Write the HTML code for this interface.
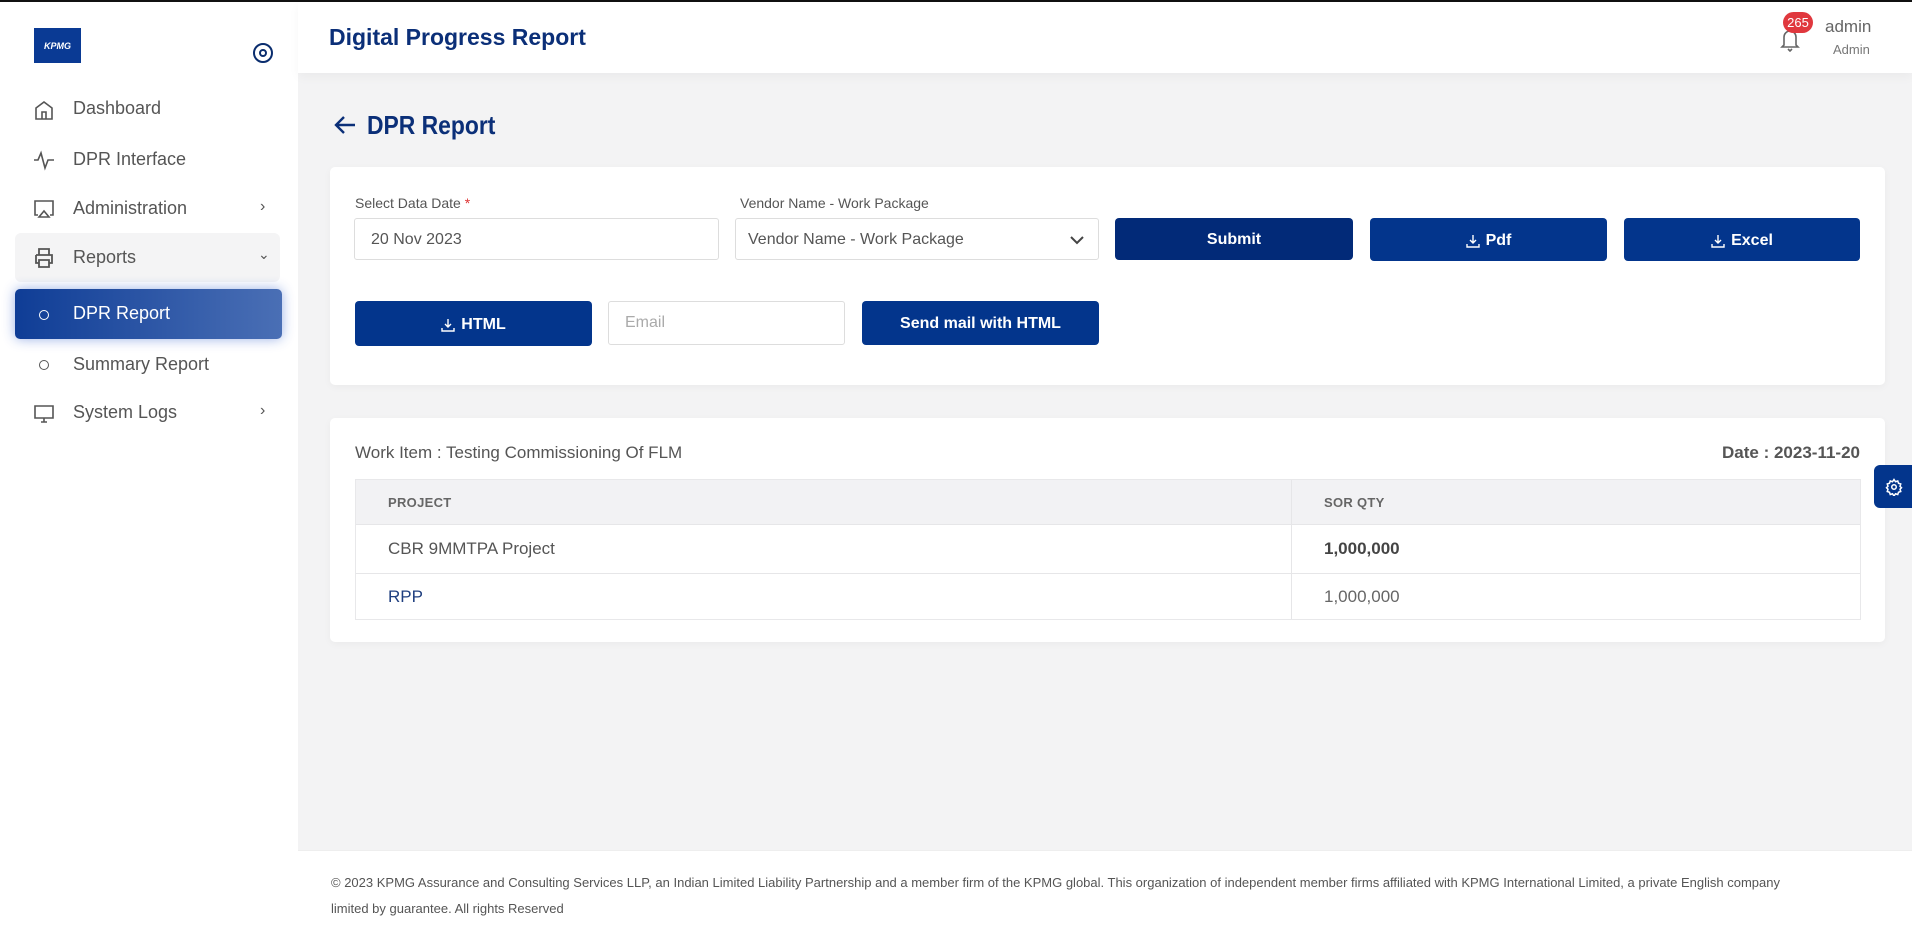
<!DOCTYPE html>
<html><head><meta charset="utf-8"><style>
*{box-sizing:border-box;margin:0;padding:0}
body{width:1912px;height:928px;overflow:hidden;background:#f3f3f4;font-family:"Liberation Sans",sans-serif;color:#555;position:relative}
.abs{position:absolute}
.topline{left:0;top:0;width:1912px;height:2px;background:#111}
.side{left:0;top:2px;width:298px;height:926px;background:#fff}
.header{left:298px;top:2px;width:1614px;height:71px;background:#fff;box-shadow:0 4px 10px rgba(0,0,0,.04)}
.nav{position:absolute;left:73px;font-size:18px;color:#555}
.ico{position:absolute;left:32px;width:24px;height:24px}
.card{background:#fff;border-radius:5px;box-shadow:0 2px 8px rgba(0,0,0,.04)}
.lbl{font-size:14px;color:#555}
.inp{border:1px solid #ddd;border-radius:3px;background:#fff;font-size:16px;color:#555;padding-left:16px;display:flex;align-items:center}
.btn{background:#03358c;border-radius:4px;color:#fff;font-size:16px;font-weight:bold;display:flex;align-items:center;justify-content:center;gap:6px;padding-top:2px}
.dl{width:14px;height:14px}
</style></head><body>
<div class="abs topline"></div>
<div class="abs side">
 <div class="abs" style="left:34px;top:26px;width:47px;height:35px;background:#0a3a94;color:#fff;font-size:9px;font-weight:bold;font-style:italic;display:flex;align-items:center;justify-content:center">KPMG</div>
 <svg class="abs" style="left:252px;top:40px" width="22" height="22" viewBox="0 0 22 22"><circle cx="11" cy="11" r="9" fill="none" stroke="#0a2d6e" stroke-width="2"/><circle cx="11" cy="11" r="3" fill="none" stroke="#0a2d6e" stroke-width="2"/></svg>
 <svg class="ico" style="top:96px" viewBox="0 0 24 24" fill="none" stroke="#555" stroke-width="1.6"><path d="M4 21V10l8-6 8 6v11zM10 21v-7h4v7"/></svg>
 <div class="nav" style="top:96px">Dashboard</div>
 <svg class="ico" style="top:146px" viewBox="0 0 24 24" fill="none" stroke="#555" stroke-width="1.6"><path d="M2 12h4l3-7 4 15 3-8h6"/></svg>
 <div class="nav" style="top:147px">DPR Interface</div>
 <svg class="ico" style="top:195px" viewBox="0 0 24 24" fill="none" stroke="#555" stroke-width="1.6"><path d="M6 18H3V4h18v14h-3M12 14l-5 6h10z"/></svg>
 <div class="nav" style="top:196px">Administration</div>
 <div class="abs" style="left:260px;top:196px;font-size:16px;color:#555">›</div>
 <div class="abs" style="left:15px;top:231px;width:265px;height:49px;background:#f4f4f5;border-radius:6px"></div>
 <svg class="ico" style="top:244px" viewBox="0 0 24 24" fill="none" stroke="#555" stroke-width="1.8"><path d="M7 9V3h10v6M4 9h16v8h-3M7 17H4V9M7 14h10v7H7z"/></svg>
 <div class="nav" style="top:245px">Reports</div>
 <div class="abs" style="left:258px;top:244px;font-size:14px;color:#555">⌄</div>
 <div class="abs" style="left:15px;top:287px;width:267px;height:50px;border-radius:5px;background:linear-gradient(90deg,#0f3d96,#4a6fb5);box-shadow:0 0 12px rgba(30,80,200,.45)"></div>
 <div class="abs" style="left:39px;top:308px;width:10px;height:10px;border:1.5px solid #fff;border-radius:50%"></div>
 <div class="nav" style="top:301px;color:#fff">DPR Report</div>
 <div class="abs" style="left:39px;top:358px;width:10px;height:10px;border:1.5px solid #555;border-radius:50%"></div>
 <div class="nav" style="top:352px">Summary Report</div>
 <svg class="ico" style="top:400px" viewBox="0 0 24 24" fill="none" stroke="#555" stroke-width="1.6"><path d="M3 4h18v12H3zM9 20h6M12 16v4"/></svg>
 <div class="nav" style="top:400px">System Logs</div>
 <div class="abs" style="left:260px;top:400px;font-size:16px;color:#555">›</div>
</div>
<div class="abs header">
 <div class="abs" style="left:31px;top:22px;font-size:23px;font-weight:bold;color:#0b2f78">Digital Progress Report</div>
 <svg class="abs" style="left:1480px;top:24px" width="24" height="26" viewBox="0 0 24 26" fill="none" stroke="#666" stroke-width="1.6"><path d="M6 19V11a6 6 0 0 1 12 0v8l2 2H4zM10 23l2 2 2-2"/></svg>
 <div class="abs" style="left:1485px;top:10px;width:30px;height:21px;border-radius:11px;background:#e0383e;color:#fff;font-size:13px;display:flex;align-items:center;justify-content:center">265</div>
 <div class="abs" style="left:1527px;top:15px;font-size:17px;color:#666">admin</div>
 <div class="abs" style="left:1535px;top:40px;font-size:13px;color:#777">Admin</div>
</div>
<svg class="abs" style="left:333px;top:114px" width="24" height="22" viewBox="0 0 24 22" fill="none" stroke="#0b2f78" stroke-width="2.4"><path d="M22 11H3M11 3l-8 8 8 8"/></svg>
<div class="abs" style="left:367px;top:110px;font-size:26px;font-weight:bold;color:#0b2f78;transform:scaleX(.88);transform-origin:left">DPR Report</div>
<div class="abs card" style="left:330px;top:167px;width:1555px;height:218px"></div>
<div class="abs lbl" style="left:355px;top:195px">Select Data Date <span style="color:#d33">*</span></div>
<div class="abs lbl" style="left:740px;top:195px">Vendor Name - Work Package</div>
<div class="abs inp" style="left:354px;top:218px;width:365px;height:42px;padding-top:2px">20 Nov 2023</div>
<div class="abs inp" style="left:735px;top:218px;width:364px;height:42px;padding-left:12px;padding-top:2px">Vendor Name - Work Package
 <svg style="position:absolute;right:14px;top:16px" width="14" height="10" viewBox="0 0 14 10" fill="none" stroke="#444" stroke-width="2"><path d="M1 2l6 6 6-6"/></svg></div>
<div class="abs btn" style="left:1115px;top:218px;width:238px;height:42px;background:#022a78">Submit</div>
<div class="abs btn" style="left:1370px;top:218px;width:237px;height:43px"><svg class="dl" viewBox="0 0 14 14" fill="none" stroke="#fff" stroke-width="1.4"><path d="M7 1v8M4 6l3 3 3-3M1 10v3h12v-3"/></svg>Pdf</div>
<div class="abs btn" style="left:1624px;top:218px;width:236px;height:43px"><svg class="dl" viewBox="0 0 14 14" fill="none" stroke="#fff" stroke-width="1.4"><path d="M7 1v8M4 6l3 3 3-3M1 10v3h12v-3"/></svg>Excel</div>
<div class="abs btn" style="left:355px;top:301px;width:237px;height:45px"><svg class="dl" viewBox="0 0 14 14" fill="none" stroke="#fff" stroke-width="1.4"><path d="M7 1v8M4 6l3 3 3-3M1 10v3h12v-3"/></svg>HTML</div>
<div class="abs inp" style="left:608px;top:301px;width:237px;height:44px;color:#aaa">Email</div>
<div class="abs btn" style="left:862px;top:301px;width:237px;height:44px">Send mail with HTML</div>
<div class="abs card" style="left:330px;top:418px;width:1555px;height:224px"></div>
<div class="abs" style="left:355px;top:443px;font-size:17px;color:#555">Work Item : Testing Commissioning Of FLM</div>
<div class="abs" style="right:52px;top:443px;font-size:17px;color:#555;font-weight:bold">Date : 2023-11-20</div>
<div class="abs" style="left:355px;top:479px;width:1506px;height:141px;border:1px solid #e8e8ea">
 <div class="abs" style="left:0;top:0;width:1504px;height:45px;background:#f2f2f4;border-bottom:1px solid #e6e6e8"></div>
 <div class="abs" style="left:935px;top:0;width:1px;height:139px;background:#e6e6e8"></div>
 <div class="abs" style="left:0;top:93px;width:1504px;height:1px;background:#e6e6e8"></div>
 <div class="abs" style="left:32px;top:15px;font-size:13px;font-weight:bold;color:#666;letter-spacing:.3px">PROJECT</div>
 <div class="abs" style="left:968px;top:15px;font-size:13px;font-weight:bold;color:#666;letter-spacing:.3px">SOR QTY</div>
 <div class="abs" style="left:32px;top:59px;font-size:17px;color:#555">CBR 9MMTPA Project</div>
 <div class="abs" style="left:968px;top:59px;font-size:17px;color:#444;font-weight:bold">1,000,000</div>
 <div class="abs" style="left:32px;top:107px;font-size:17px;color:#1f3f7f">RPP</div>
 <div class="abs" style="left:968px;top:107px;font-size:17px;color:#666">1,000,000</div>
</div>
<div class="abs" style="left:1874px;top:465px;width:40px;height:43px;background:#03358c;border-radius:6px 0 0 6px;display:flex;align-items:center;justify-content:center">
 <svg width="18" height="18" viewBox="0 0 24 24" fill="none" stroke="#fff" stroke-width="2"><circle cx="12" cy="12" r="3"/><path d="M12 2l2 3 3-1 1 3 3 1-1 3 2 2-2 2 1 3-3 1-1 3-3-1-2 3-2-3-3 1-1-3-3-1 1-3-2-2 2-2-1-3 3-1 1-3 3 1z"/></svg></div>
<div class="abs" style="left:298px;top:850px;width:1614px;height:78px;background:#fff;border-top:1px solid #eee"></div>
<div class="abs" style="left:331px;top:870px;width:1560px;font-size:13px;line-height:26px;color:#555;white-space:nowrap">© 2023 KPMG Assurance and Consulting Services LLP, an Indian Limited Liability Partnership and a member firm of the KPMG global. This organization of independent member firms affiliated with KPMG International Limited, a private English company<br>limited by guarantee. All rights Reserved</div>
</body></html>
